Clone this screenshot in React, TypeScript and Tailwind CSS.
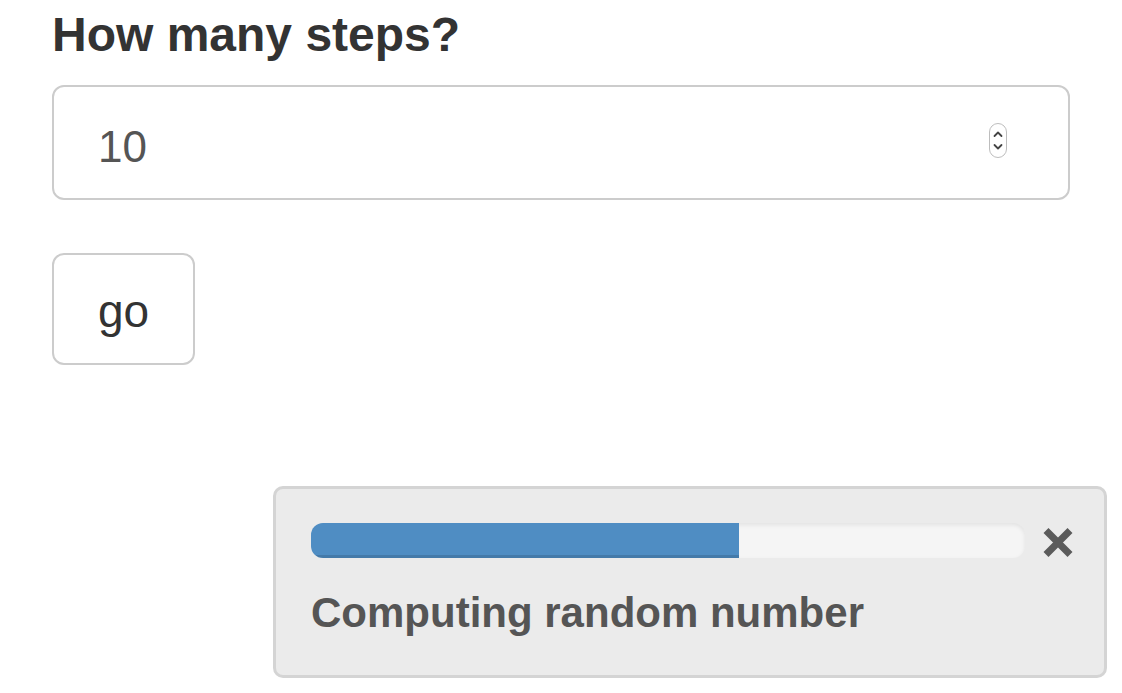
import React from "react";

function Spinner() {
  return (
    <svg width="18" height="35" viewBox="0 0 18 35" className="block">
      <rect x="0.5" y="0.5" width="17" height="34" rx="8.5" fill="#fff" stroke="#bdbdbd" strokeWidth="1" />
      <path d="M5.5 13 L9 9.5 L12.5 13" fill="none" stroke="#444" strokeWidth="1.8" strokeLinecap="round" strokeLinejoin="round" />
      <path d="M5.5 22 L9 25.5 L12.5 22" fill="none" stroke="#444" strokeWidth="1.8" strokeLinecap="round" strokeLinejoin="round" />
    </svg>
  );
}

function CloseX() {
  return (
    <svg width="30" height="31" viewBox="0 0 30 31" className="block">
      <path d="M3 3.5 L27 27.5 M27 3.5 L3 27.5" stroke="#5b5b5b" strokeWidth="7" strokeLinecap="butt" />
    </svg>
  );
}

export default function App() {
  const progress = 60;
  return (
    <div
      className="relative w-full h-[693px] bg-white overflow-hidden pl-[52px]"
      style={{ fontFamily: '"Liberation Sans", Arial, sans-serif' }}
    >
      <div className="pt-[7px]">
        <div className="text-[48px] leading-[56px] font-bold text-[#333]">How many steps?</div>
      </div>

      <div className="mt-[22px] w-[1018px] h-[115px] border-2 border-[#cccccc] rounded-[12px] bg-white flex items-center pl-[44px] pr-[61px]">
        <span className="mt-[9px] text-[44px] leading-[44px] text-[#555]">10</span>
        <div className="ml-auto -mt-[4px]">
          <Spinner />
        </div>
      </div>

      <div className="mt-[53px] w-[143px] h-[112px] border-2 border-[#cccccc] rounded-[12px] bg-white flex items-center justify-center">
        <span className="mt-[4px] text-[46px] leading-[46px] text-[#333]">go</span>
      </div>

      <div className="absolute left-[273px] top-[486px] w-[834px] h-[192px] bg-[#ebebeb] border-[3px] border-[#d4d4d4] rounded-[10px] pt-[34px] pl-[35px]">
        <div className="flex items-center">
          <div className="w-[714px] h-[35px] rounded-[12px] bg-[#f5f5f5] overflow-hidden shadow-[inset_0_2px_4px_rgba(0,0,0,0.08)]">
            <div
              className="h-full bg-[#4f8dc3] shadow-[inset_0_-3px_0_rgba(0,0,0,0.13)]"
              style={{ width: `${progress}%` }}
            />
          </div>
          <div className="ml-[18px] mt-[4px]">
            <CloseX />
          </div>
        </div>
        <div className="mt-[34px] text-[42px] leading-[41px] font-bold text-[#555]">Computing random number</div>
      </div>
    </div>
  );
}
